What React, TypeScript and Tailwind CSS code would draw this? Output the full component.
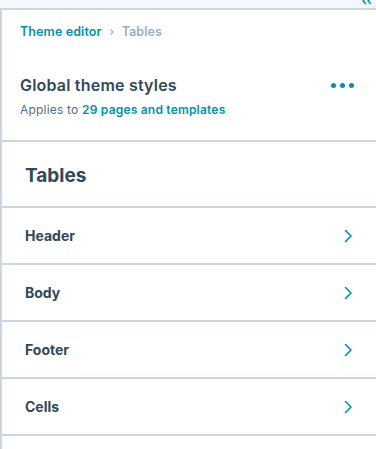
import React from "react";

const Chevron = () => (
  <svg width="10" height="14" viewBox="0 0 10 14" fill="none">
    <path d="M2.5 1.5 L8 7 L2.5 12.5" stroke="#0091ae" strokeWidth="1.6" strokeLinecap="round" strokeLinejoin="round" />
  </svg>
);

export default function App() {
  const rows = ["Header", "Body", "Footer", "Cells"];
  return (
    <div className="w-[376px] h-[449px] overflow-hidden bg-white text-[#33475b]" style={{ fontFamily: "Inter, 'Noto Sans', sans-serif" }}>
      <div className="h-[10px] bg-[#f5f8fa] border-b-2 border-[#cbd6e2] relative">
        <svg className="absolute right-[4px] top-0" width="10" height="5" viewBox="0 0 10 5">
          <path d="M4 -2 L1 1 L4 4 M9 -2 L6 1 L9 4" stroke="#0091ae" strokeWidth="1.4" fill="none" />
        </svg>
      </div>
      <div className="border-l-2 border-[#cbd6e2] h-full">
        <div className="pl-[18px] pt-[13px] flex items-center text-[12.5px] font-semibold leading-[18px] tracking-[0.1px]">
          <span className="text-[#0091ae]">Theme editor</span>
          <svg className="mx-[6px]" width="8" height="10" viewBox="0 0 8 10"><path d="M2.5 2.5 L5 5 L2.5 7.5" stroke="#99afc4" strokeWidth="1.1" fill="none" /></svg>
          <span className="text-[#99afc4]">Tables</span>
        </div>
        <div className="pl-[18px] pr-[22px] pt-[33px] flex items-start justify-between">
          <div>
            <div className="text-[16px] font-semibold leading-[22px] tracking-[0.2px]">Global theme styles</div>
            <div className="text-[12px] mt-[5px] leading-[18px] tracking-[0.2px]">
              <span className="text-[#516f90]">Applies to </span>
              <span className="text-[#0091ae] font-semibold">29 pages and templates</span>
            </div>
          </div>
          <div className="flex gap-[4px] mt-[9px]">
            <span className="w-[5px] h-[5px] rounded-full bg-[#0091ae]" />
            <span className="w-[5px] h-[5px] rounded-full bg-[#0091ae]" />
            <span className="w-[5px] h-[5px] rounded-full bg-[#0091ae]" />
          </div>
        </div>
        <div className="mt-[21px] border-t-2 border-[#cbd6e2]" />
        <div className="h-[64px] pl-[23px] pt-[4px] flex items-center text-[19px] font-bold">Tables</div>
        {rows.map((r) => (
          <div key={r} className="h-[57px] border-t-2 border-[#cbd6e2] pl-[23px] pr-[23px] flex items-center justify-between">
            <span className="text-[14px] font-bold">{r}</span>
            <Chevron />
          </div>
        ))}
        <div className="border-t-2 border-[#cbd6e2]" />
      </div>
    </div>
  );
}
